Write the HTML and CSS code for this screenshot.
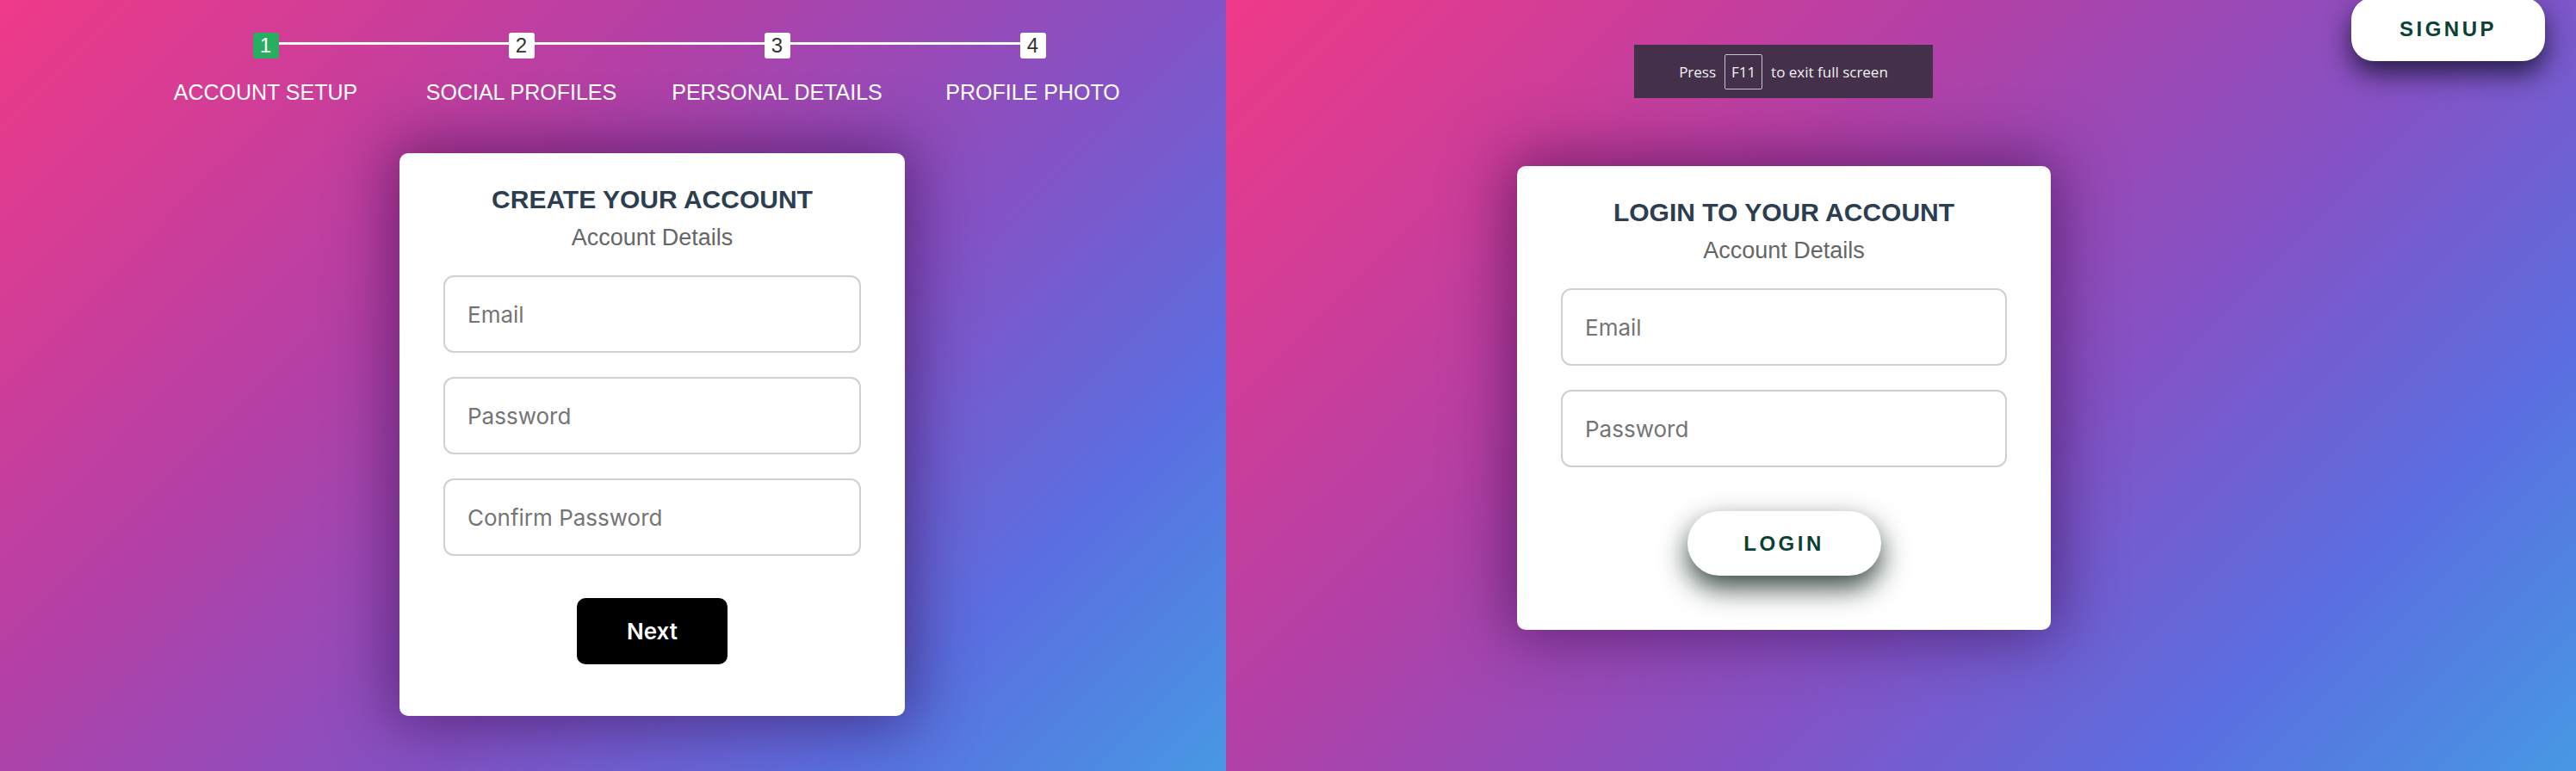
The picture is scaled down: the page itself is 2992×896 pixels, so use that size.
FILE: index.html
```html
<!DOCTYPE html>
<html lang="en">
<head>
<meta charset="utf-8">
<title>Account forms</title>
<link rel="stylesheet" href="styles.css">
</head>
<body>
<div class="screens">
  <section class="panel panel-signup">
    <ol class="progress">
      <li class="step is-active"><span class="step-num">1</span><span class="step-label">ACCOUNT SETUP</span></li>
      <li class="step"><span class="step-num">2</span><span class="step-label">SOCIAL PROFILES</span></li>
      <li class="step"><span class="step-num">3</span><span class="step-label">PERSONAL DETAILS</span></li>
      <li class="step"><span class="step-num">4</span><span class="step-label">PROFILE PHOTO</span></li>
    </ol>
    <form class="card card-signup">
      <h2 class="card-title">CREATE YOUR ACCOUNT</h2>
      <h3 class="card-subtitle">Account Details</h3>
      <input class="field" type="text" placeholder="Email">
      <input class="field" type="password" placeholder="Password">
      <input class="field" type="password" placeholder="Confirm Password">
      <div class="actions"><button type="button" class="btn-next">Next</button></div>
    </form>
  </section>
  <section class="panel panel-login">
    <div class="fs-toast"><span>Press</span><span class="key">F11</span><span>to exit full screen</span></div>
    <button type="button" class="btn-signup">SIGNUP</button>
    <form class="card card-login">
      <h2 class="card-title">LOGIN TO YOUR ACCOUNT</h2>
      <h3 class="card-subtitle">Account Details</h3>
      <input class="field" type="text" placeholder="Email">
      <input class="field" type="password" placeholder="Password">
      <div class="actions actions-login"><button type="button" class="btn-login">LOGIN</button></div>
    </form>
  </section>
</div>
</body>
</html>
```
FILE: styles.css
```css
* { box-sizing: border-box; }
html, body { margin: 0; padding: 0; }
body {
  width: 2992px;
  height: 896px;
  overflow: hidden;
  font-family: "Liberation Sans", Arial, sans-serif;
}
.screens {
  display: flex;
  width: 2992px;
  height: 896px;
}
.panel {
  position: relative;
  height: 896px;
  overflow: hidden;
  background: linear-gradient(135deg, #ef3a88 0%, #b340a6 35%, #8452c5 60%, #5b6ee0 80%, #4798e4 100%);
  display: flex;
  flex-direction: column;
}
.panel-signup { width: 1424px; }
.panel-login { width: 1568px; }

/* progress steps */
.progress {
  list-style: none;
  margin: 38px 0 0 160px;
  padding: 0;
  display: flex;
}
.step {
  position: relative;
  width: 297px;
  display: flex;
  flex-direction: column;
  align-items: center;
}
.step + .step::before {
  content: "";
  position: absolute;
  top: 11px;
  left: -50%;
  width: 100%;
  height: 3px;
  background: #fff;
  z-index: 0;
}
.step-num {
  position: relative;
  z-index: 1;
  width: 30px;
  height: 30px;
  border-radius: 3px;
  background: #fff;
  color: #333;
  font-size: 24px;
  line-height: 30px;
  text-align: center;
}
.step.is-active .step-num {
  background: #27ae60;
  color: #fff;
}
.step-label {
  margin-top: 25px;
  color: #fff;
  font-size: 25px;
  line-height: 28px;
  white-space: nowrap;
}

/* cards */
.card {
  background: #fff;
  border-radius: 10px;
  box-shadow: 0 0 70px 10px rgba(40, 0, 60, 0.5);
  display: flex;
  flex-direction: column;
  text-align: center;
}
.card-signup {
  width: 587px;
  margin: 57px 0 0 464px;
  padding: 36px 51px 60px;
}
.card-login {
  width: 620px;
  margin: 193px 0 0 338px;
  padding: 36px 51px 63px;
}
.card-title {
  margin: 0;
  font-size: 30px;
  line-height: 35px;
  font-weight: 700;
  color: #2c3e50;
}
.card-subtitle {
  margin: 12px 0 28px;
  font-size: 27px;
  line-height: 31px;
  font-weight: 400;
  color: #666;
}
.field {
  display: block;
  width: 100%;
  height: 90px;
  margin: 0 0 28px;
  padding: 0 26px;
  border: 2px solid #d0d0d0;
  border-radius: 12px;
  background: #fff;
  font-family: Inter, "Open Sans", sans-serif;
  font-size: 26px;
  font-weight: 400;
  color: #2c3e50;
  outline: none;
}
.field::placeholder { color: #757575; }
.field:last-of-type { margin-bottom: 0; }
.actions {
  display: flex;
  justify-content: center;
  margin-top: 49px;
}
.actions-login { margin-top: 51px; }
.btn-next {
  width: 175px;
  height: 77px;
  border: 0;
  border-radius: 10px;
  background: #000;
  color: #fff;
  font-family: Inter, "Open Sans", sans-serif;
  font-weight: 600;
  font-size: 26px;
}
.btn-login, .btn-signup {
  border: 0;
  background: #fff;
  color: #0b4034;
  font-family: "Liberation Sans", Arial, sans-serif;
  font-weight: 700;
  font-size: 24px;
  letter-spacing: 3.5px;
}
.btn-login {
  width: 225px;
  height: 75px;
  border-radius: 38px;
  box-shadow: 0 14px 32px rgba(5, 25, 20, 0.8);
}
.btn-signup {
  position: absolute;
  top: -3px;
  left: 1307px;
  width: 225px;
  height: 74px;
  border-radius: 26px;
  box-shadow: 0 14px 30px rgba(15, 15, 40, 0.8);
  z-index: 2;
}

/* fullscreen toast */
.fs-toast {
  position: absolute;
  top: 52px;
  left: 474px;
  width: 347px;
  height: 62px;
  background: #44304a;
  display: flex;
  align-items: center;
  justify-content: center;
  gap: 10px;
  color: #f2f2f2;
  font-family: "Open Sans", "Noto Sans", sans-serif;
  font-size: 17px;
  z-index: 2;
}
.fs-toast .key {
  width: 44px;
  height: 41px;
  border: 1px solid #c9c2cb;
  border-radius: 2px;
  display: flex;
  align-items: center;
  justify-content: center;
}
```
